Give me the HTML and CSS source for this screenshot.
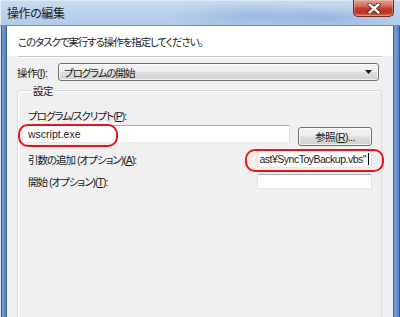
FILE: index.html
```html
<!DOCTYPE html>
<html lang="ja">
<head>
<meta charset="utf-8">
<title>操作の編集</title>
<link rel="stylesheet" href="styles.css">
</head>
<body>
<div class="window">
  <div class="titlebar">
    <span class="title">操作の編集</span>
    <div class="close">
      <svg width="14" height="11" viewBox="0 0 14 11">
        <path d="M2.5 1.5 L11.5 9.5 M11.5 1.5 L2.5 9.5" stroke="#4a1510" stroke-width="4" stroke-linecap="round"/>
        <path d="M2.5 1.5 L11.5 9.5 M11.5 1.5 L2.5 9.5" stroke="#ffffff" stroke-width="2.4" stroke-linecap="round"/>
      </svg>
    </div>
  </div>
  <div class="frame">
    <div class="client">
      <div class="intro">このタスクで実行する操作を指定してください。</div>
      <div class="sep"></div>
      <div class="action-row">
        <span class="lbl">操作(<u>I</u>):</span>
        <div class="combo">
          <span>プログラムの開始</span>
          <svg width="7" height="4" viewBox="0 0 7 4"><path d="M0 0 H7 L3.5 4 Z" fill="#1a1a1a"/></svg>
        </div>
      </div>
      <fieldset class="group">
        <legend>設定</legend>
        <div class="lbl prog-lbl">プログラム/スクリプト(<u>P</u>):</div>
        <div class="prog-row">
          <div class="input prog-input">
            <span class="clip">wscript.exe</span>
            <span class="mark mark1"></span>
          </div>
          <div class="btn">参照(<u>R</u>)...</div>
        </div>
        <div class="field-row row2">
          <span class="lbl">引数の追加 (オプション)(<u>A</u>):</span>
          <div class="input arg-input">
            <span class="clip end"><span class="val">ast¥SyncToyBackup.vbs"</span><span class="caret"></span></span>
            <span class="mark mark2"></span>
          </div>
        </div>
        <div class="field-row row3">
          <span class="lbl">開始 (オプション)(<u>T</u>):</span>
          <div class="input start-input"></div>
        </div>
      </fieldset>
    </div>
  </div>
</div>
</body>
</html>
```

FILE: styles.css
```css
html, body {
  margin: 0;
  padding: 0;
}
body {
  width: 400px;
  height: 317px;
  overflow: hidden;
  font-family: "Liberation Sans", "Noto Sans CJK JP", sans-serif;
  font-size: 10.5px;
  font-feature-settings: "palt";
  color: #1a1a1a;
}
u {
  text-decoration: underline;
  text-underline-offset: 1px;
}
.window {
  width: 400px;
  height: 317px;
  display: flex;
  flex-direction: column;
  background: #7aa2d6;
}
.titlebar {
  height: 25px;
  border-bottom: 1px solid #6f8fb8;
  display: flex;
  justify-content: space-between;
  align-items: flex-start;
  background:
    radial-gradient(ellipse 90px 14px at 255px 16px, rgba(120,160,210,0.45), rgba(120,160,210,0) 100%),
    radial-gradient(ellipse 70px 12px at 330px 18px, rgba(110,150,205,0.4), rgba(110,150,205,0) 100%),
    linear-gradient(to bottom, #c8dbef 0%, #bcd2ec 50%, #b3cbe9 100%);
  box-shadow: inset 1px 0 0 #e6eef8, inset 0 1px 0 #dfe9f5;
}
.title {
  font-family: "Noto Sans CJK JP", sans-serif;
  font-size: 12px;
  line-height: 14px;
  color: #1c1c1c;
  padding: 6px 0 0 7px;
  letter-spacing: -0.4px;
}
.close {
  width: 41px;
  height: 17px;
  margin-right: 6px;
  box-sizing: border-box;
  border: 1px solid #6b2a22;
  border-top: none;
  border-radius: 0 0 5px 5px;
  background: linear-gradient(to bottom, #e4a193 0%, #d2705f 35%, #c2392a 55%, #bb3526 80%, #d8745e 100%);
  box-shadow: inset 0 0 0 1px rgba(255,255,255,0.25);
  display: flex;
  align-items: center;
  justify-content: center;
}
.frame {
  flex: 1;
  display: flex;
  padding: 0 7px;
  background:
    linear-gradient(to right, #dfe6ee 0 1px, #34598f 1px 2px, #6d98d3 2px 4px, #5b86c4 4px 6px, #41649a 6px 7px, transparent 7px) left / 7px 100% no-repeat,
    linear-gradient(to right, #41649a 0 1px, #6d98d3 1px 4px, #5b86c4 4px 6px, #34598f 6px 7px) right / 7px 100% no-repeat,
    #7aa2d6;
}
.client {
  flex: 1;
  background: #f0f0f0;
  display: flex;
  flex-direction: column;
}
.intro {
  height: 30px;
  background: #ffffff;
  padding: 1px 0 0 11px;
  box-sizing: border-box;
  display: flex;
  align-items: center;
  font-family: "Noto Sans CJK JP", sans-serif;
  letter-spacing: -1.1px;
}
.sep {
  height: 1px;
  margin: 0 11px;
  background: #c4c4c4;
  box-shadow: 0 1px 0 #ffffff;
}
.action-row {
  display: flex;
  align-items: center;
  margin: 6px 14px 0 10px;
}
.lbl {
  white-space: nowrap;
  letter-spacing: -1px;
}
.action-row .lbl {
  width: 41px;
  letter-spacing: -0.6px;
}
.combo {
  flex: 1;
  height: 18px;
  box-sizing: border-box;
  border: 1px solid #707070;
  border-radius: 3px;
  background: linear-gradient(to bottom, #f4f4f4 0%, #ececec 48%, #dedede 52%, #d2d2d2 100%);
  box-shadow: inset 0 0 0 1px rgba(255,255,255,0.7);
  display: flex;
  align-items: center;
  justify-content: space-between;
  padding: 0 6px 0 5px;
  letter-spacing: -1.1px;
}
.group {
  margin: 2px 11px 0 10px;
  padding: 11px 9px 0 10px;
  border: 1px solid #d5dfe5;
  border-bottom: none;
  border-radius: 3px 3px 0 0;
  box-shadow: inset 1px 1px 0 #ffffff;
  flex: 1;
  min-width: 0;
}
.group legend {
  padding: 0 2px;
  margin-left: 3px;
  line-height: 15px;
  font-family: "Noto Sans CJK JP", sans-serif;
  letter-spacing: -0.5px;
}
.prog-lbl {
  line-height: 14px;
  height: 14px;
}
.prog-row {
  display: flex;
  align-items: flex-start;
  gap: 8px;
  margin: 2px 0 0 -6px;
}
.input {
  position: relative;
  box-sizing: border-box;
  background: #ffffff;
  border: 1px solid;
  border-color: #abadb3 #dbdfe6 #e3e9ef #e2e3ea;
  display: flex;
  align-items: center;
  font-size: 10.5px;
}
.clip {
  flex: 1;
  overflow: hidden;
  white-space: nowrap;
  display: flex;
  align-items: center;
}
.clip.end {
  justify-content: flex-end;
}
.prog-input {
  flex: 1;
  height: 18px;
  padding-left: 5px;
}
.btn {
  width: 74px;
  height: 19px;
  margin-top: 2px;
  box-sizing: border-box;
  border: 1px solid #707070;
  border-radius: 3px;
  background: linear-gradient(to bottom, #f4f4f4 0%, #ececec 48%, #dedede 52%, #d2d2d2 100%);
  box-shadow: inset 0 0 0 1px rgba(255,255,255,0.7);
  display: flex;
  align-items: center;
  justify-content: center;
  letter-spacing: -0.6px;
}
.field-row {
  display: flex;
  align-items: center;
  justify-content: space-between;
}
.row2 {
  margin-top: 4px;
}
.row3 {
  margin-top: 6px;
}
.arg-input {
  width: 115px;
  height: 18px;
  padding: 0 2px 0 0;
}
.arg-input .val {
  flex: none;
  letter-spacing: -0.5px;
}
.start-input {
  width: 115px;
  height: 15px;
}
.caret {
  flex: none;
  width: 1px;
  height: 12px;
  margin-left: 2px;
  background: #000000;
}
.mark {
  position: absolute;
  border: 2px solid #e8141a;
  border-radius: 10px;
  box-sizing: border-box;
  pointer-events: none;
}
.mark1 {
  left: -5px;
  top: -2px;
  width: 100px;
  height: 23px;
}
.mark2 {
  left: -13px;
  top: -2px;
  width: 139px;
  height: 23px;
}
```
